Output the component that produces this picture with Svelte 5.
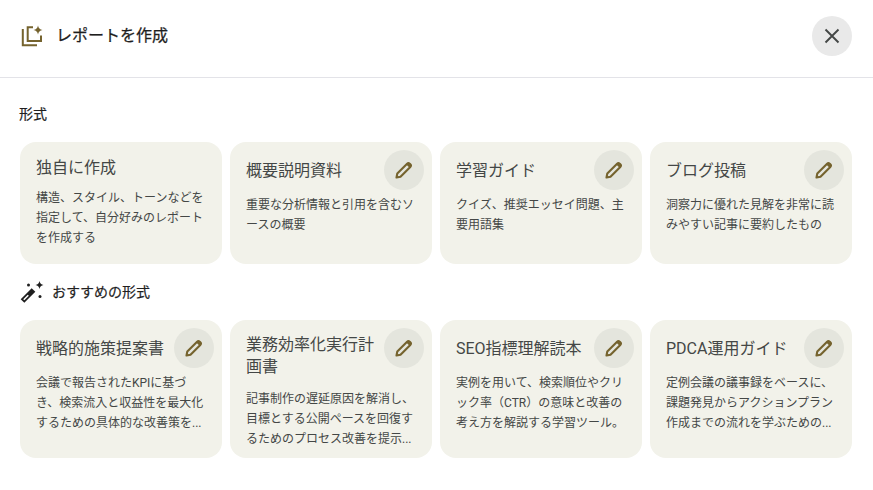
<script>
  const top = [
    { t: '概要説明資料', d: '重要な分析情報と引用を含むソースの概要' },
    { t: '学習ガイド', d: 'クイズ、推奨エッセイ問題、主要用語集' },
    { t: 'ブログ投稿', d: '洞察力に優れた見解を非常に読みやすい記事に要約したもの' }
  ];
  const rec = [
    { t: '戦略的施策提案書', d: '会議で報告されたKPIに基づき、検索流入と収益性を最大化するための具体的な改善策を...' },
    { t: '業務効率化実行計画書', d: '記事制作の遅延原因を解消し、目標とする公開ペースを回復するためのプロセス改善を提示...', wrap: true },
    { t: 'SEO指標理解読本', d: '実例を用いて、検索順位やクリック率（CTR）の意味と改善の考え方を解説する学習ツール。' },
    { t: 'PDCA運用ガイド', d: '定例会議の議事録をベースに、課題発見からアクションプラン作成までの流れを学ぶための...' }
  ];
</script>

{#snippet pencil()}
  <button class="edit" aria-label="編集">
    <svg width="24" height="24" viewBox="0 0 24 24">
      <path d="M4.500 19.500l.8-4 9.800-9.800q1.300-1.300 2.600 0l.6.6q1.300 1.300 0 2.600L8.500 18.700z" fill="none" stroke="#75632e" stroke-width="2.100" stroke-linejoin="round"/>
      <path d="M14.300 6.500 16 4.800l3.200 3.200-1.700 1.700z" fill="#75632e"/>
    </svg>
  </button>
{/snippet}

{#snippet card(c)}
  <div class="card" class:wrap={c.wrap}>
    <div class="head">
      <div class="title">{c.t}</div>
      {@render pencil()}
    </div>
    <div class="desc">{c.d}</div>
  </div>
{/snippet}

<div class="page">
  <header>
    <div class="hl">
      <svg width="24" height="24" viewBox="0 0 24 24" fill="none" stroke="#75632e" stroke-width="2">
        <path d="M2.800 5v16.200H17" />
        <path d="M13 3.300H7.700V17H21v-5.500" />
        <path d="M18 1.500q.6 3.900 4.500 4.500-3.900.6-4.500 4.500-.6-3.900-4.500-4.500 3.900-.6 4.500-4.500z" fill="#75632e" stroke="none"/>
      </svg>
      <h1>レポートを作成</h1>
    </div>
    <button class="close" aria-label="閉じる">
      <svg width="24" height="24" viewBox="0 0 24 24"><path d="M5.500 5.500l13 13M18.500 5.500l-13 13" stroke="#444746" stroke-width="1.900" fill="none"/></svg>
    </button>
  </header>
  <main>
    <h2 class="s1">形式</h2>
    <div class="grid">
      <div class="card plain">
        <div class="title">独自に作成</div>
        <div class="desc">構造、スタイル、トーンなどを指定して、自分好みのレポートを作成する</div>
      </div>
      {#each top as c}{@render card(c)}{/each}
    </div>
    <h2 class="s2">
      <svg width="24" height="24" viewBox="0 0 24 24">
        <path d="M2.500 21 13.500 10" stroke="#1f1f1f" stroke-width="5.200" fill="none"/>
        <path d="M3.800 19.800 8.300 15.300" stroke="#fff" stroke-width="1.500" fill="none"/>
        <path d="M19.500 1q.6 3.400 4 4-3.400.6-4 4-.6-3.400-4-4 3.400-.6 4-4z" fill="#1f1f1f"/>
        <circle cx="8.500" cy="5" r="1.500" fill="#1f1f1f"/>
        <circle cx="20" cy="16.500" r="1.500" fill="#1f1f1f"/>
      </svg>
      おすすめの形式
    </h2>
    <div class="grid">
      {#each rec as c}{@render card(c)}{/each}
    </div>
  </main>
</div>

<style>
  :global(body) { margin: 0; background: #fff; }
  .page { width: 873px; height: 490px; font-family: Roboto, "Noto Sans CJK JP", sans-serif; color: #1f1f1f; overflow: hidden; }
  header { border-bottom: 1px solid #e3e3e8; display: flex; align-items: center; justify-content: space-between; padding: 0 21px 5px 20px; height: 72px; }
  .hl { display: flex; align-items: center; gap: 12px; }
  h1 { margin: 0 0 5px; font-size: 16px; font-weight: 400; -webkit-text-stroke: 0.25px #1f1f1f; }
  .close { width: 40px; height: 40px; border-radius: 50%; border: 0; background: #e9e9e9; display: flex; align-items: center; justify-content: center; padding: 0; }
  main { padding: 0 21px 0 20px; }
  h2 { margin: 0; font-size: 14px; font-weight: 400; line-height: 20px; -webkit-text-stroke: 0.2px #1f1f1f; }
  .s1 { padding-top: 26px; margin-bottom: 18px; margin-left: -1px; }
  .s2 { display: flex; align-items: center; gap: 8px; margin: 16px 0; }
  .grid { display: grid; grid-template-columns: repeat(4, 202px); gap: 8px; }
  .card { background: #f2f2ea; border-radius: 16px; padding: 8px 8px 9px 16px; box-sizing: border-box; min-height: 122px; }
  .head { display: flex; align-items: center; gap: 8px; min-height: 42px; }
  .title { font-size: 16px; font-weight: 400; line-height: 22px; color: #444746; padding: 7px 0; flex: 1; min-width: 0; }
  .wrap .title { padding: 6px 0 8px; }
  .plain .title { padding: 7px 0 0; }
  .edit { flex: none; align-self: flex-start; width: 40px; height: 40px; border-radius: 50%; border: 0; background: #e4e5dd; padding: 0; display: flex; align-items: center; justify-content: center; }
  .desc { font-size: 12px; line-height: 20px; color: #444746; padding-right: 8px; margin-top: 3px; }
  .plain .desc { margin-top: 9px; }
</style>
